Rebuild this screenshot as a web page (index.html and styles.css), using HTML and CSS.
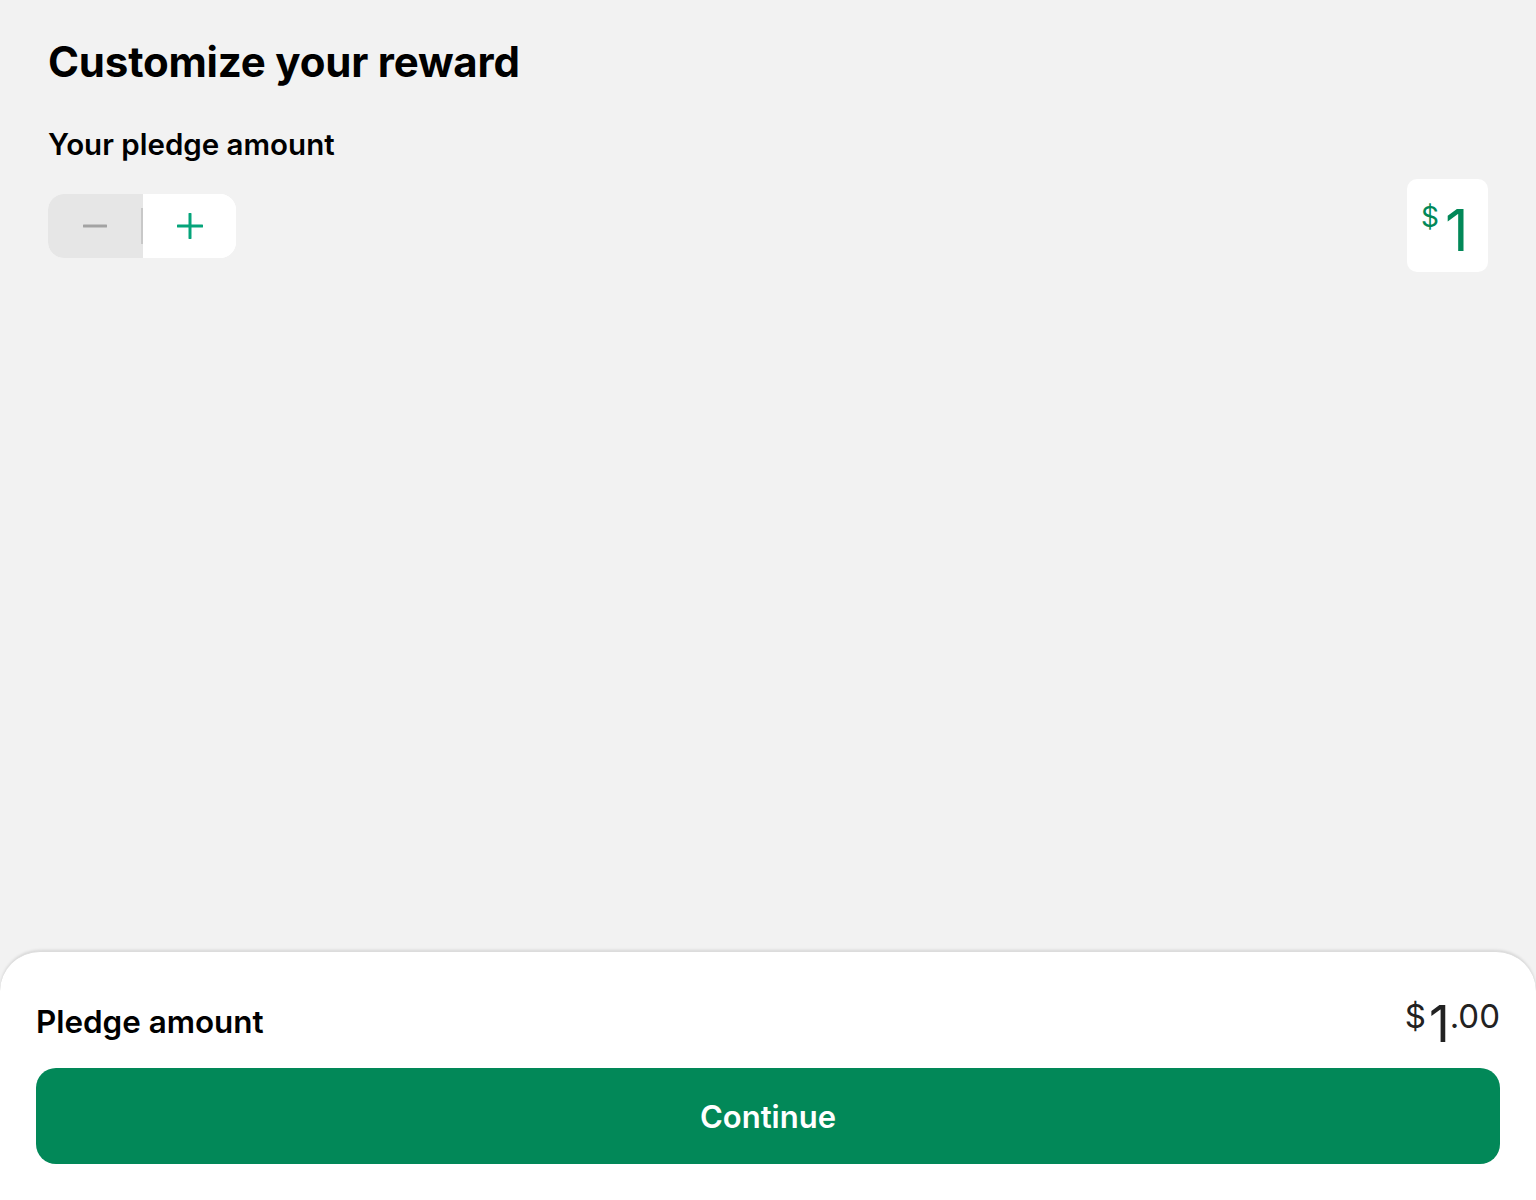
FILE: index.html
```html
<!DOCTYPE html>
<html lang="en">
<head>
<meta charset="utf-8">
<title>Customize your reward</title>
<link rel="stylesheet" href="styles.css">
</head>
<body>
<div class="page">
  <main class="content">
    <h1 class="title">Customize your reward</h1>
    <h2 class="subtitle">Your pledge amount</h2>
    <div class="pledge-row">
      <div class="stepper">
        <button class="step step-minus" aria-label="Decrease">
          <svg width="24" height="24" viewBox="0 0 24 24"><path d="M1 12h22" stroke="#a3a3a3" stroke-width="3" stroke-linecap="round"/></svg>
        </button>
        <span class="step-sep"></span>
        <button class="step step-plus" aria-label="Increase">
          <svg width="26" height="26" viewBox="0 0 26 26"><path d="M13 1v24M1 13h24" stroke="#05a47a" stroke-width="3" stroke-linecap="round"/></svg>
        </button>
      </div>
      <div class="amount-box"><span class="amount-cur">$</span><span class="amount-val">1</span></div>
    </div>
  </main>
  <footer class="sheet">
    <div class="sheet-row">
      <span class="sheet-label">Pledge amount</span>
      <span class="sheet-total"><span class="tot-cur">$</span><span class="tot-int">1</span><span class="tot-dec">.00</span></span>
    </div>
    <button class="continue">Continue</button>
  </footer>
</div>
</body>
</html>
```
FILE: styles.css
```css
* { box-sizing: border-box; }
html, body { margin: 0; padding: 0; }
body {
  background: #f2f2f2;
  font-family: Inter, "Noto Sans", sans-serif;
  color: #000;
}
.page {
  min-height: 100vh;
  display: flex;
  flex-direction: column;
}
.content {
  flex: 1;
  padding: 36px 48px 0 48px;
}
.title {
  margin: 0;
  font-size: 42px;
  font-weight: 700;
  letter-spacing: -0.2px;
  line-height: 52px;
  padding-left: 0;
}
.subtitle {
  margin: 39px 0 0 0;
  font-size: 29.5px;
  font-weight: 600;
  line-height: 34px;
  padding-left: 0;
}
.pledge-row {
  display: flex;
  justify-content: space-between;
  align-items: center;
  margin-top: 18px;
}
.stepper {
  display: flex;
  align-items: center;
  height: 64px;
  width: 188px;
  border-radius: 16px;
  overflow: hidden;
  background: #fff;
}
.step {
  border: 0;
  padding: 0;
  margin: 0;
  height: 64px;
  display: flex;
  align-items: center;
  justify-content: center;
}
.step-minus { width: 93px; background: #e6e6e6; }
.step-plus { flex: 1; background: #fff; }
.step-sep {
  width: 2px;
  height: 64px;
  background: linear-gradient(#e6e6e6 0 14px, #c8c8c8 14px 50px, #e6e6e6 50px);
}
.amount-box {
  width: 81px;
  height: 93px;
  background: #fff;
  border-radius: 10px;
  display: flex;
  align-items: flex-start;
  padding: 19px 0 0 14px;
  color: #028858;
}
.amount-cur {
  font-size: 28px;
  line-height: 34px;
  margin-right: 6px;
  margin-top: 2px;
}
.amount-val {
  font-size: 58px;
  font-weight: 400;
  line-height: 60px;
  margin-top: 2px;
}
.sheet {
  background: #fff;
  border-radius: 40px 40px 0 0;
  box-shadow: 0 -1px 3px rgba(0,0,0,0.12);
  border-top: 1px solid #dcdcdc;
  padding: 44px 36px 36px 36px;
}
.sheet-row {
  display: flex;
  justify-content: space-between;
  align-items: center;
  height: 52px;
}
.sheet-label {
  font-size: 31.4px;
  font-weight: 600;
  line-height: 36px;
  padding-left: 0;
  margin-top: 0;
}
.sheet-total {
  display: flex;
  align-items: flex-start;
  color: #222;
  line-height: 1;
}
.tot-cur { font-size: 33px; margin-top: 4px; margin-right: 3px; }
.tot-int { font-size: 51px; margin-top: 2px; }
.tot-dec { font-size: 33px; margin-top: 4px; }
.continue {
  display: block;
  width: 100%;
  height: 96px;
  margin-top: 20px;
  border: 0;
  border-radius: 20px;
  background: #028858;
  color: #fff;
  font-family: Inter, "Noto Sans", sans-serif;
  font-size: 31px;
  font-weight: 600;
}
```
